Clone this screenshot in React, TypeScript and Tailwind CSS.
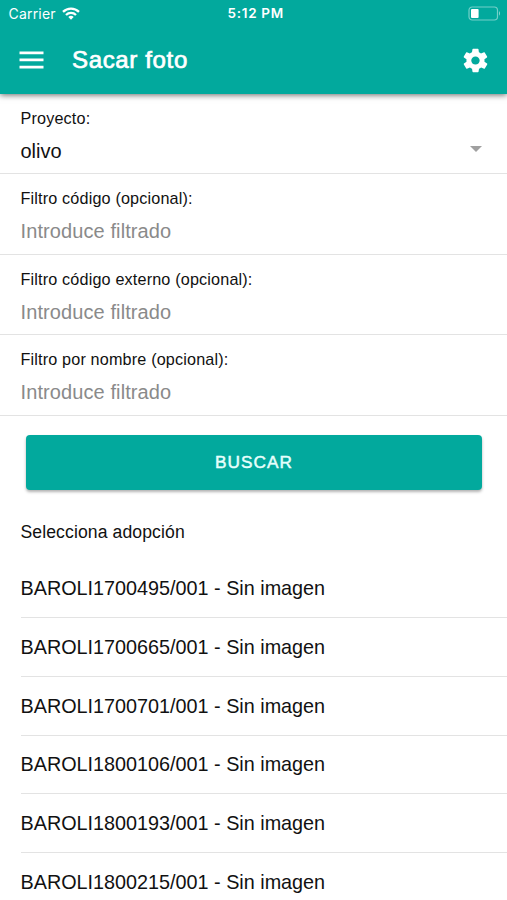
import { IoMdSettings } from "react-icons/io";

interface Filter {
  id: string;
  label: string;
}

const filters: Filter[] = [
  { id: "code", label: "Filtro código (opcional):" },
  { id: "external", label: "Filtro código externo (opcional):" },
  { id: "name", label: "Filtro por nombre (opcional):" },
];

const adoptions = [
  "BAROLI1700495/001",
  "BAROLI1700665/001",
  "BAROLI1700701/001",
  "BAROLI1800106/001",
  "BAROLI1800193/001",
  "BAROLI1800215/001",
];

function StatusBar() {
  return (
    <div className="grid h-[27px] grid-cols-3 items-center pl-[8.5px] pr-[6px] font-[Inter,sans-serif] text-[14px] leading-none">
      <div className="flex items-center gap-[6px] pt-px">
        <span className="text-[14px] tracking-[0.2px]">Carrier</span>
        <svg className="mb-[2px] h-[13px] w-[18px]" viewBox="0 0 18 13" fill="none" stroke="currentColor" strokeWidth="2.3">
          <path d="M1 4.9a11.4 11.4 0 0 1 16 0" />
          <path d="M4 8a7.1 7.1 0 0 1 10 0" />
          <path d="M9 12.7 6.3 10a3.8 3.8 0 0 1 5.4 0z" fill="currentColor" stroke="none" />
        </svg>
      </div>
      <span className="pl-[2px] pt-px text-center text-[13.5px] font-semibold tracking-[0.7px]">5:12 PM</span>
      <svg className="h-[15px] w-[33px] justify-self-end" viewBox="0 0 33 15" fill="none">
        <rect x="1" y="1" width="28.5" height="13" rx="3.2" stroke="#fff" strokeOpacity="0.45" strokeWidth="1.2" />
        <rect x="3" y="3" width="7.6" height="9" rx="1" fill="#fff" />
        <path d="M31 5.3v4.4c1.4-.5 1.4-3.9 0-4.4z" fill="#fff" fillOpacity="0.5" />
      </svg>
    </div>
  );
}

function Header() {
  return (
    <header className="relative h-[94px] bg-[#02a99d] text-white shadow-[0_1px_6px_rgba(0,0,0,0.6)]">
      <StatusBar />
      <div className="flex h-[66px] items-center pl-[19px] pr-[17.5px]">
        <button aria-label="Menu">
          <svg className="h-[18px] w-[25px]" viewBox="0 0 25 18" fill="currentColor">
            <path d="M.5.5h24v2.7H.5zM.5 7.6h24v2.7H.5zM.5 14.8h24v2.7H.5z" />
          </svg>
        </button>
        <h1 className="ml-[28px] flex-1 text-[24px] leading-none tracking-[0.65px] [-webkit-text-stroke:0.7px_currentColor]">
          Sacar foto
        </h1>
        <button aria-label="Ajustes">
          <IoMdSettings className="size-[29px]" />
        </button>
      </div>
    </header>
  );
}

export default function App() {
  return (
    <div className="h-[900px] overflow-hidden bg-white font-['Liberation_Sans',Arial,sans-serif] text-[#111]">
      <Header />

      <div className="flex h-[80px] flex-col border-b-[1.5px] border-[#e3e3e3] px-[20.5px] pt-[14px]">
        <span className="text-[16.2px] leading-[20px] tracking-[0.16px]">Proyecto:</span>
        <div className="mt-[11px] flex items-center justify-between text-[20px] leading-[24px]">
          <span>olivo</span>
          <svg className="mr-[4.5px] mb-[5px] h-[6px] w-[12px]" viewBox="0 0 12 6">
            <path d="M0 0h12L6 6z" fill="#a0a0a0" />
          </svg>
        </div>
      </div>

      {filters.map((filter) => (
        <div key={filter.id} className="flex h-[80.7px] flex-col border-b-[1.5px] border-[#e3e3e3] px-[20.5px] pt-[14px]">
          <label htmlFor={filter.id} className="text-[16.2px] leading-[20px] tracking-[0.16px]">
            {filter.label}
          </label>
          <input
            id={filter.id}
            placeholder="Introduce filtrado"
            className="mt-[11px] h-[24px] text-[20px] leading-[24px] tracking-[0.1px] outline-none placeholder:text-[#8a8a8a]"
          />
        </div>
      ))}

      <button className="mx-[26px] mt-[18.5px] flex h-[55px] w-[456px] items-center justify-center rounded-[4px] bg-[#02a99d] pt-px text-[17.2px] leading-none tracking-[1.1px] text-[#e6fffc] shadow-[0_2px_3px_rgba(0,0,0,0.3)] [-webkit-text-stroke:0.5px_currentColor]">
        BUSCAR
      </button>

      <h2 className="mt-[30px] pl-[20.5px] text-[17.6px] leading-[24px] tracking-[0.1px]">Selecciona adopción</h2>

      <ul className="mt-[16px] pl-[20.5px]">
        {adoptions.map((code) => (
          <li key={code} className="flex h-[58.7px] items-center border-b-[1.5px] border-[#e3e3e3] pt-[1.5px] text-[19.8px] leading-none">
            {code} - Sin imagen
          </li>
        ))}
      </ul>
    </div>
  );
}
